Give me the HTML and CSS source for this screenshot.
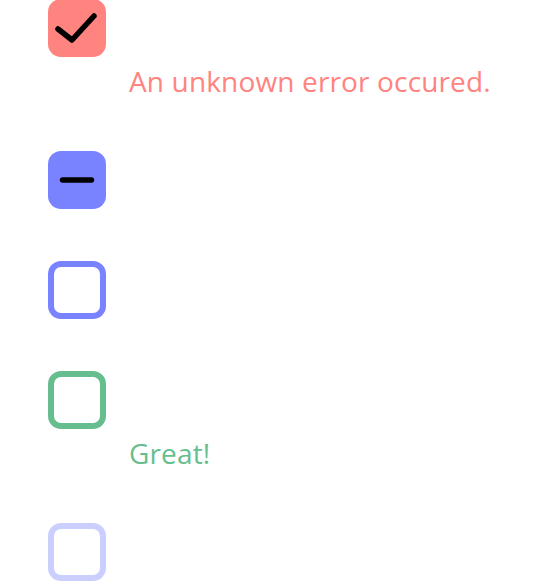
FILE: index.html
```html
<!DOCTYPE html>
<html>
<head>
<meta charset="utf-8">
<link rel="stylesheet" href="styles.css">
</head>
<body>
<div class="list">
  <div class="item">
    <div class="box box-error">
      <svg width="58" height="58" viewBox="0 0 58 58"><path d="M10 30 L24 41 L46 17" fill="none" stroke="#000" stroke-width="5.5" stroke-linecap="round" stroke-linejoin="round"/></svg>
    </div>
    <div class="msg msg-error">An unknown error occured.</div>
  </div>
  <div class="item">
    <div class="box box-indeterminate">
      <svg width="58" height="58" viewBox="0 0 58 58"><path d="M14.5 29 H43.5" fill="none" stroke="#000" stroke-width="5.5" stroke-linecap="round"/></svg>
    </div>
  </div>
  <div class="item">
    <div class="box box-outline"></div>
  </div>
  <div class="item">
    <div class="box box-success"></div>
    <div class="msg msg-success">Great!</div>
  </div>
  <div class="item">
    <div class="box box-disabled"></div>
  </div>
</div>
</body>
</html>
```

FILE: styles.css
```css
html, body {
  margin: 0;
  padding: 0;
  background: #fff;
}
body {
  font-family: "Open Sans", Lato, sans-serif;
}
.list {
  display: flex;
  flex-direction: column;
  gap: 52px;
  padding-left: 48px;
  margin-top: -1px;
}
.item {
  display: flex;
  flex-direction: column;
}
.box {
  box-sizing: border-box;
  width: 58px;
  height: 58px;
  border-radius: 13px;
}
.box svg { display: block; }
.box-error { background: #ff837f; }
.box-indeterminate { background: #7a83ff; }
.box-outline { border: 6px solid #7a83ff; }
.box-success { border: 6px solid #66be8f; }
.box-disabled { border: 6px solid #cacfff; }
.msg {
  margin-left: 81px;
  font-size: 28px;
  line-height: 36px;
  margin-top: 6px;
  letter-spacing: 0.15px;
}
.msg-error { color: #ff837f; }
.msg-success { color: #66be8f; }
```
